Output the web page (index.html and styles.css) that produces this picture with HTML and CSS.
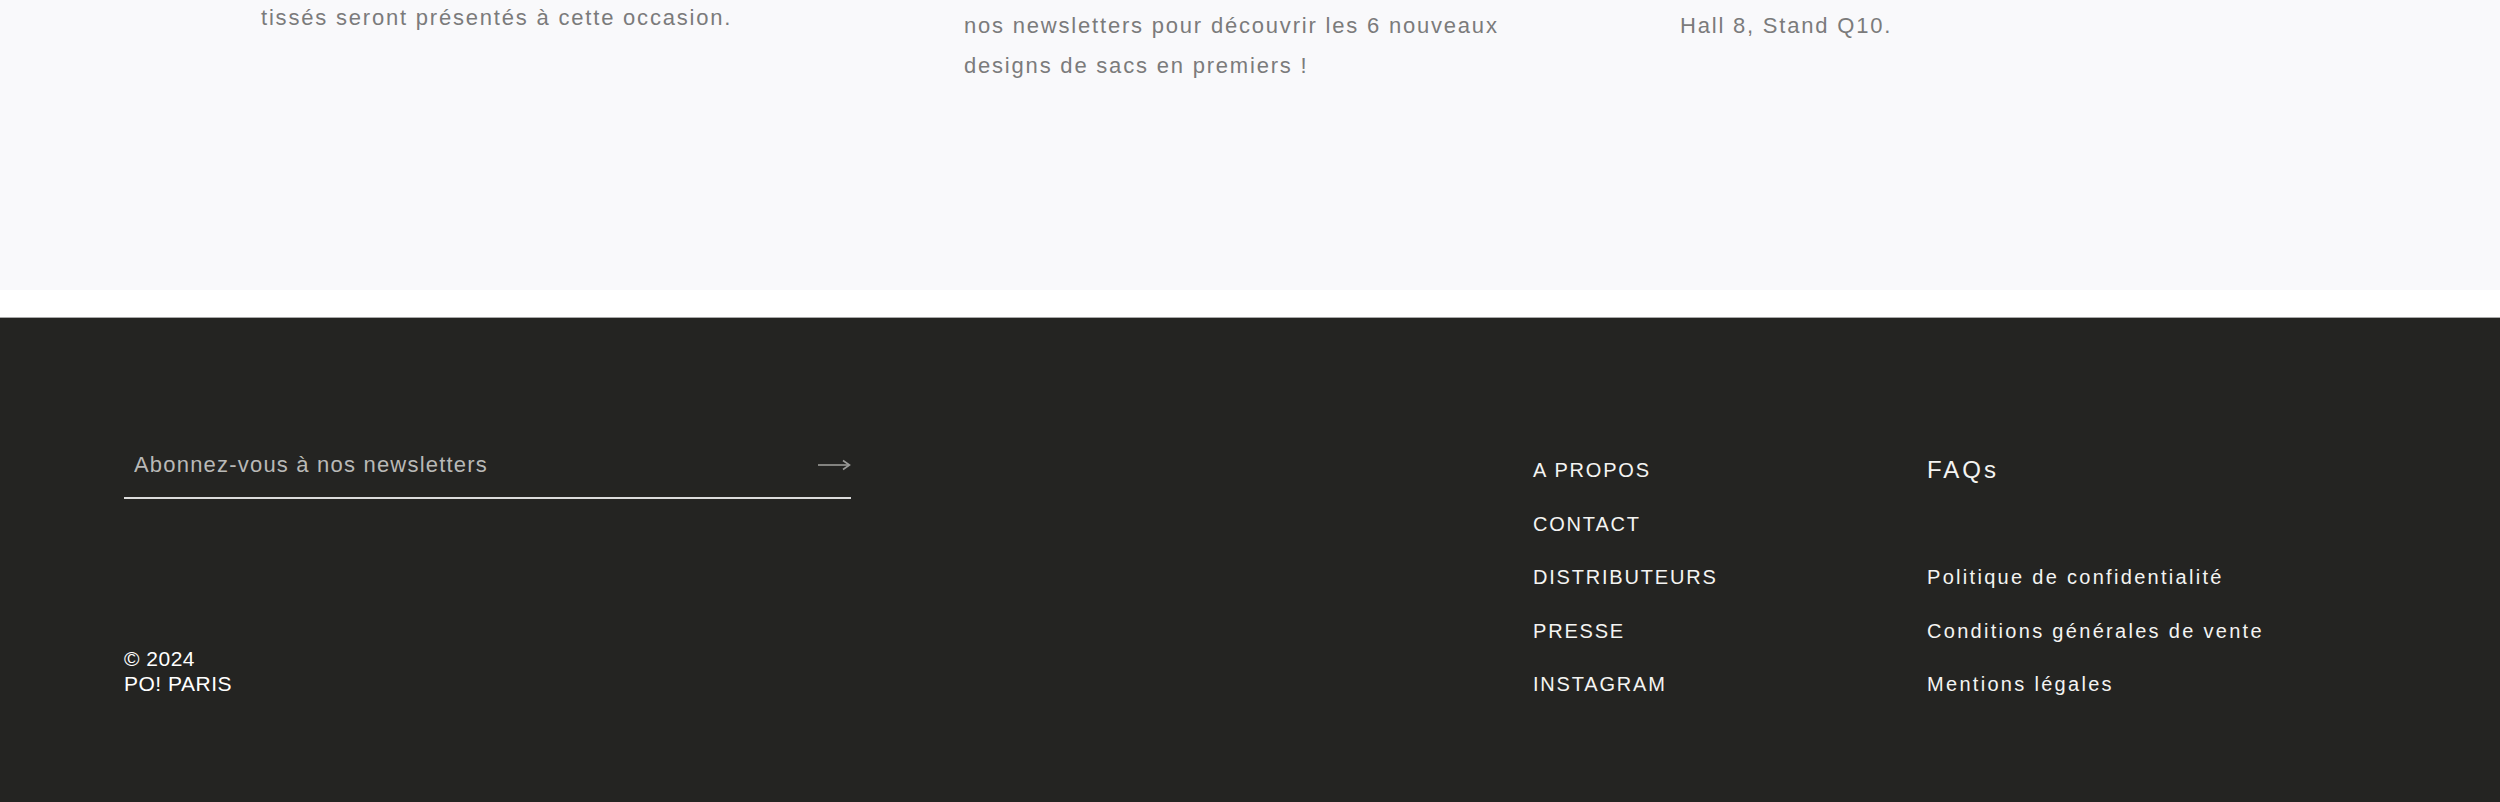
FILE: index.html
```html
<!DOCTYPE html>
<html lang="fr">
<head>
    <meta charset="UTF-8">
    <meta name="viewport" content="width=device-width, initial-scale=1.0">
    <title>PO! Paris</title>
    <link rel="stylesheet" href="styles.css">
</head>
<body>
<section class="events">
    <div class="event event-first">
        <p>Les nouveaux sacs en papier<br>tissés seront présentés à cette occasion.</p>
    </div>
    <div class="event">
        <p>Pour être informés, inscrivez-vous à<br>nos newsletters pour découvrir les 6 nouveaux designs de sacs en premiers !</p>
    </div>
    <div class="event">
        <p>Paris Nord Villepinte,<br>Hall 8, Stand Q10.</p>
    </div>
</section>

<footer>
    <div class="footer-left">
        <form class="newsletter" onsubmit="return false">
            <input type="email" placeholder="Abonnez-vous à nos newsletters">
            <button type="submit" aria-label="S'abonner">
                <svg width="34" height="14" viewBox="0 0 34 14" fill="none" stroke="#9a9a98" stroke-width="1.6">
                    <path d="M1 7H32"/>
                    <path d="M26 2.5L32.5 7L26 11.5"/>
                </svg>
            </button>
        </form>
        <div class="copyright">
            <span>© 2024</span>
            <span>PO! PARIS</span>
        </div>
    </div>

    <ul class="links">
        <li><a href="#">A PROPOS</a></li>
        <li><a href="#">CONTACT</a></li>
        <li><a href="#">DISTRIBUTEURS</a></li>
        <li><a href="#">PRESSE</a></li>
        <li><a href="#">INSTAGRAM</a></li>
    </ul>

    <ul class="links legal">
        <li><a href="#" class="faq">FAQs</a></li>
        <li></li>
        <li><a href="#">Politique de confidentialité</a></li>
        <li><a href="#">Conditions générales de vente</a></li>
        <li><a href="#">Mentions légales</a></li>
    </ul>
</footer>
</body>
</html>
```

FILE: styles.css
```css
:root {
    --dark: #242422;
    --muted: #7b7b7b;
}

* {
    box-sizing: border-box;
}

body {
    margin: 0;
    background: #fff;
    font-family: 'Liberation Sans', Arial, sans-serif;
}

/* bloc événements (haut de page) */
.events {
    display: grid;
    grid-template-columns: 703px 716px 1fr;
    margin-top: -42px;
    padding: 0 0 204px 261px;
    background: #f9f9fb;
}

.event {
    padding-top: 8px;
}

.event-first {
    padding-top: 0;
}

.event p {
    margin: 0;
    max-width: 580px;
    color: var(--muted);
    font-size: 22px;
    line-height: 40px;
    letter-spacing: 1.8px;
}

/* footer */
footer {
    display: grid;
    grid-template-columns: 1fr 394px 449px;
    margin-top: 27px;
    padding: 123px 124px 140px;
    background: var(--dark);
    border-top: 1px solid #a9a9a9;
    color: #fff;
}

.footer-left {
    display: flex;
    flex-direction: column;
    justify-content: space-between;
}

.newsletter {
    display: flex;
    align-items: center;
    width: 727px;
    padding: 12px 0 20px;
    border-bottom: 2px solid #dcdcdc;
}

.newsletter input {
    flex: 1;
    padding: 0 0 0 10px;
    border: none;
    outline: none;
    background: transparent;
    color: #fff;
    font-family: inherit;
    font-size: 22px;
    line-height: 24px;
    letter-spacing: 1.2px;
}

.newsletter input::placeholder {
    color: #b9b9b7;
}

.newsletter button {
    display: flex;
    padding: 0;
    border: none;
    background: none;
    cursor: pointer;
}

.copyright {
    display: flex;
    flex-direction: column;
    font-size: 21px;
    line-height: 25px;
    letter-spacing: 0.5px;
}

.links {
    display: flex;
    flex-direction: column;
    gap: 29.5px;
    margin: 0;
    padding: 17px 0 0;
    list-style: none;
}

.links li {
    height: 24px;
    line-height: 24px;
}

.links a {
    color: #f4f4f2;
    text-decoration: none;
    font-size: 20px;
    letter-spacing: 1.8px;
}

.links a:hover {
    color: #fff;
    text-decoration: underline;
}

.legal a {
    letter-spacing: 2.3px;
}

.legal .faq {
    font-size: 24px;
    letter-spacing: 3px;
}
```
